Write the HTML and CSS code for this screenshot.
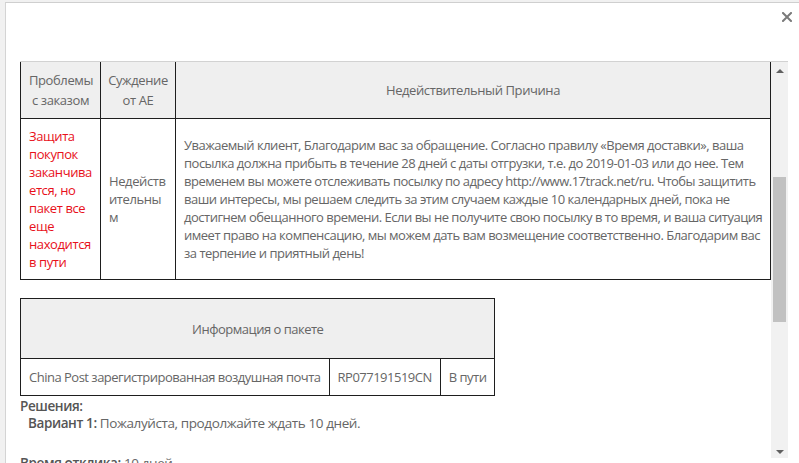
FILE: index.html
```html
<!DOCTYPE html>
<html lang="ru">
<head>
<meta charset="utf-8">
<title>Спор</title>
<link rel="stylesheet" href="styles.css">
</head>
<body>
<div class="modal">
  <div class="modal-head">
    <span class="close" aria-label="Закрыть">
      <svg width="10" height="10" viewBox="0 0 10 10"><path d="M1 1L9 9M9 1L1 9" stroke="#7a7a7a" stroke-width="2" stroke-linecap="square"/></svg>
    </span>
  </div>
  <div class="scroll-area">
    <div class="content">
      <table class="dispute">
        <colgroup><col class="c1"><col class="c2"><col class="c3"></colgroup>
        <thead>
          <tr>
            <th class="h1">Проблемы с заказом</th>
            <th>Суждение от AE</th>
            <th>Недействительный Причина</th>
          </tr>
        </thead>
        <tbody>
          <tr>
            <td class="red">Защита покупок заканчивается, но пакет все еще находится в пути</td>
            <td>Недействительным</td>
            <td class="reason">Уважаемый клиент, Благодарим вас за обращение. Согласно правилу «Время доставки», ваша<br>
посылка должна прибыть в течение 28 дней с даты отгрузки, т.е. до 2019-01-03 или до нее. Тем<br>
временем вы можете отслеживать посылку по адресу http://www.17track.net/ru. Чтобы защитить<br>
ваши интересы, мы решаем следить за этим случаем каждые 10 календарных дней, пока не<br>
достигнем обещанного времени. Если вы не получите свою посылку в то время, и ваша ситуация<br>
имеет право на компенсацию, мы можем дать вам возмещение соответственно. Благодарим вас<br>
за терпение и приятный день!</td>
          </tr>
        </tbody>
      </table>

      <table class="package">
        <thead>
          <tr><th colspan="3">Информация о пакете</th></tr>
        </thead>
        <tbody>
          <tr>
            <td>China Post зарегистрированная воздушная почта</td>
            <td>RP077191519CN</td>
            <td>В пути</td>
          </tr>
        </tbody>
      </table>

      <div class="solutions">
        <div class="label">Решения:</div>
        <div class="option"><b>Вариант 1:</b> Пожалуйста, продолжайте ждать 10 дней.</div>
        <div class="response"><b>Время отклика:</b> 10 дней</div>
      </div>
    </div>
    <div class="scrollbar">
      <span class="arrow up"></span>
      <span class="track-gap top"></span>
      <span class="thumb"></span>
      <span class="track-gap bottom"></span>
      <span class="arrow down"></span>
    </div>
  </div>
</div>
</body>
</html>
```

FILE: styles.css
```css
html, body {
  margin: 0;
  padding: 0;
}

body {
  background: #f1f1f1;
  height: 463px;
  overflow: hidden;
  font-family: "Open Sans", "Liberation Sans", sans-serif;
  font-size: 13px;
  letter-spacing: -0.4px;
  color: #666;
}

.modal {
  margin: 2px 0 0 5px;
  border-top: 1px solid #cfcfcf;
  border-left: 1px solid #d4d4d4;
  background: #fff;
  padding: 0 11px 0 14px;
  height: 700px;
}

.modal-head {
  height: 58px;
  display: flex;
  justify-content: flex-end;
  align-items: flex-start;
}

.close {
  display: block;
  width: 10px;
  height: 10px;
  margin-top: 9px;
  margin-right: -4px;
}

.close svg {
  display: block;
}

.scroll-area {
  border-top: 1px solid #d2d2d2;
  display: flex;
  align-items: flex-start;
}

.content {
  flex: 1;
  min-width: 0;
}

table {
  border-collapse: collapse;
  font-size: 13px;
  color: #666;
}

th, td {
  border: 1px solid #1e1e1e;
}

th {
  font-weight: normal;
  background: #efefef;
}

.dispute {
  width: 751px;
  table-layout: fixed;
}

.dispute td {
  overflow-wrap: anywhere;
  word-break: break-word;
}

.dispute thead th {
  border-top: 0;
  padding: 8px 5px;
  line-height: 20px;
  height: 40px;
}

.dispute thead th.h1 {
  padding: 8px 8px;
}

.dispute td {
  padding: 8px;
  line-height: 18px;
  vertical-align: middle;
  text-align: left;
}

.dispute td.reason {
  padding-right: 1px;
  white-space: nowrap;
  letter-spacing: -0.5px;
  overflow: hidden;
}

.dispute .c1 { width: 80px; }
.dispute .c2 { width: 75px; }

.red {
  color: #e8101a;
}

.package {
  margin-top: 18px;
  white-space: nowrap;
  letter-spacing: -0.5px;
}

.package th {
  padding: 21px 8px 20px;
  line-height: 18px;
}

.package td {
  padding: 9px 8px;
  line-height: 18px;
  text-align: center;
}

.solutions {
  font-size: 13.5px;
  line-height: 17px;
  color: #666;
  margin-top: 2px;
}

.solutions b {
  font-weight: 600;
  color: #555;
}

.label {
  font-weight: 600;
  color: #555;
}

.option {
  padding-left: 8px;
}

.response {
  margin-top: 23px;
}

.scrollbar {
  width: 17px;
  height: 396px;
  background: #f1f1f1;
  display: flex;
  flex-direction: column;
  align-items: center;
  flex-shrink: 0;
}

.arrow {
  width: 0;
  height: 0;
  border-left: 4px solid transparent;
  border-right: 4px solid transparent;
}

.arrow.up {
  margin-top: 7px;
  border-bottom: 4px solid #606060;
}

.arrow.down {
  margin-bottom: 4px;
  border-top: 4px solid #606060;
}

.track-gap.top {
  height: 104px;
}

.track-gap.bottom {
  flex: 1;
}

.thumb {
  width: 13px;
  height: 145px;
  background: #c1c1c1;
}
```
